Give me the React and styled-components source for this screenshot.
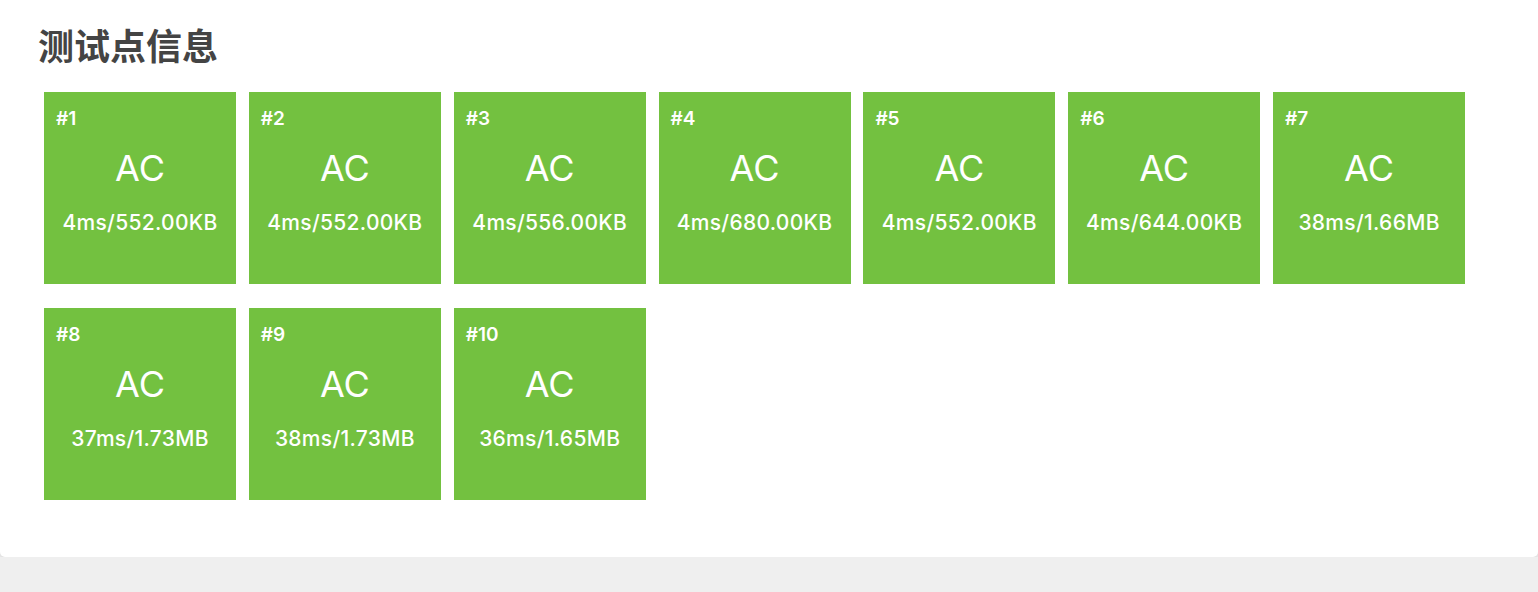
import styled, { createGlobalStyle } from 'styled-components';

const cases = [
    { id: 1, time: '4ms', mem: '552.00KB' },
    { id: 2, time: '4ms', mem: '552.00KB' },
    { id: 3, time: '4ms', mem: '556.00KB' },
    { id: 4, time: '4ms', mem: '680.00KB' },
    { id: 5, time: '4ms', mem: '552.00KB' },
    { id: 6, time: '4ms', mem: '644.00KB' },
    { id: 7, time: '38ms', mem: '1.66MB' },
    { id: 8, time: '37ms', mem: '1.73MB' },
    { id: 9, time: '38ms', mem: '1.73MB' },
    { id: 10, time: '36ms', mem: '1.65MB' },
];

export default function App() {
    return (
        <>
            <GlobalStyle />
            <Card>
                <Title>测试点信息</Title>
                <Grid>
                    {cases.map((c) => (
                        <Tile key={c.id} status="AC">
                            <CaseId>#{c.id}</CaseId>
                            <Verdict>AC</Verdict>
                            <Stats>{c.time}/{c.mem}</Stats>
                        </Tile>
                    ))}
                </Grid>
            </Card>
        </>
    );
}

const GlobalStyle = createGlobalStyle`
    html, body {
        margin : 0;
        padding : 0;
        background : #efefef;
        font-family : Inter, "Liberation Sans", "Noto Sans CJK SC", sans-serif;
    }
`;

const Card = styled.div`
    background : #fff;
    border-radius : 0 0 5px 5px;
    box-shadow : 0 1px 4px rgba(0,0,0,0.12);
    padding : 22px 38px 57px;
`;

const Title = styled.h2`
    margin : 0 0 26px;
    font-family : "Noto Sans CJK SC", sans-serif;
    font-size : 36px;
    line-height : 44px;
    font-weight : 700;
    color : #444;
`;

const Grid = styled.div`
    display : flex;
    flex-wrap : wrap;
    row-gap : 24px;
    padding-left : 6px;
`;

const Tile = styled.div`
    width : 192px;
    height : 192px;
    margin-right : 12.85px;
    box-sizing : border-box;
    padding : 17px 12px 0;
    display : flex;
    flex-direction : column;
    color : #fff;
    background : ${(p) => (p.status === 'AC' ? '#73c140' : '#e74c3c')};
`;

const CaseId = styled.div`
    font-size : 19px;
    line-height : 20px;
    font-weight : 600;
`;

const Verdict = styled.div`
    margin-top : 19px;
    font-size : 36px;
    line-height : 40px;
    text-align : center;
`;

const Stats = styled.div`
    margin-top : 23px;
    font-size : 21px;
    line-height : 24px;
    font-weight : 500;
    letter-spacing : 0.3px;
    text-align : center;
`;
